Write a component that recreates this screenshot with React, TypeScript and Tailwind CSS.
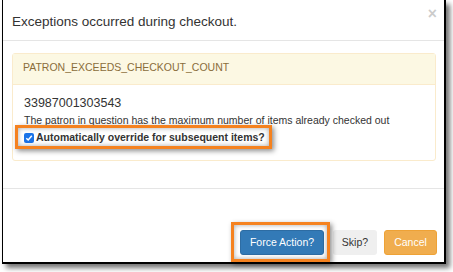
import React from "react";

export default function App() {
  return (
    <div
      className="relative w-[453px] h-[272px] overflow-hidden bg-white text-[#333]"
      style={{ fontFamily: '"Liberation Sans", Arial, sans-serif' }}
    >
      <div className="ml-[2px] w-[444px] h-[264px] border-l border-r-2 border-b-2 border-black bg-white shadow-[4px_4px_5px_rgba(0,0,0,0.55)] flex flex-col">
        {/* header */}
        <div className="h-[41px] border-b border-[#e5e5e5] flex justify-between shrink-0">
          <div className="pl-[9px] pt-[12px] text-[13.5px] leading-[19px] text-[#333]">
            Exceptions occurred during checkout.
          </div>
          <div className="pr-[7px] pt-[6px] text-[15.75px] leading-[16px] font-bold text-black opacity-20">
            ×
          </div>
        </div>
        {/* body */}
        <div className="h-[147px] shrink-0 pl-[9px] pt-[12px]">
          <div className="w-[424px] border border-[#faebcc] rounded-[3px]">
            <div className="h-[31px] bg-[#fcf8e3] border-b border-[#faebcc] px-[10px] pt-[6px] text-[10.5px] leading-[15px] text-[#8a6d3b]">
              PATRON_EXCEEDS_CHECKOUT_COUNT
            </div>
            <div className="px-[11px] pt-[10px] pb-[15px]">
              <div className="text-[12.5px] leading-[17px]">33987001303543</div>
              <div className="mt-[1px] text-[10.5px] leading-[15px]">
                The patron in question has the maximum number of items already checked out
              </div>
              <div className="mt-[2px] flex items-center text-[10.5px] leading-[15px] font-bold">
                <span className="w-[10px] h-[10px] rounded-[2px] bg-[#1a73e8] flex items-center justify-center mr-[2px]">
                  <svg width="8" height="8" viewBox="0 0 8 8">
                    <path d="M1.3 4.2 L3.2 6 L6.8 1.8" stroke="white" strokeWidth="1.5" fill="none" />
                  </svg>
                </span>
                Automatically override for subsequent items?
              </div>
            </div>
          </div>
        </div>
        {/* footer */}
        <div className="flex-1 border-t border-[#e5e5e5] flex justify-end items-start pt-[41px] pr-[7px] text-[10.5px]">
          <button className="w-[84px] h-[25px] bg-[#337ab7] border border-[#2e6da4] rounded-[3px] text-white leading-[15px]">
            Force Action?
          </button>
          <button className="ml-[9px] w-[44px] h-[25px] bg-[#efefef] rounded-[3px] text-[#333] leading-[15px]">
            Skip?
          </button>
          <button className="ml-[7px] w-[53px] h-[25px] bg-[#f0ad4e] border border-[#eea236] rounded-[3px] text-white leading-[15px]">
            Cancel
          </button>
        </div>
      </div>

      {/* annotation highlights */}
      <div className="absolute left-[15px] top-[125px] w-[257px] h-[24px] border-[3px] border-[#f5821f] shadow-[2px_2px_5px_rgba(0,0,0,0.45),inset_0_0_5px_rgba(0,0,0,0.35)]" />
      <div className="absolute left-[231px] top-[222px] w-[99px] h-[40px] border-[3px] border-[#f5821f] shadow-[2px_2px_5px_rgba(0,0,0,0.45),inset_0_0_5px_rgba(0,0,0,0.35)]" />
    </div>
  );
}
